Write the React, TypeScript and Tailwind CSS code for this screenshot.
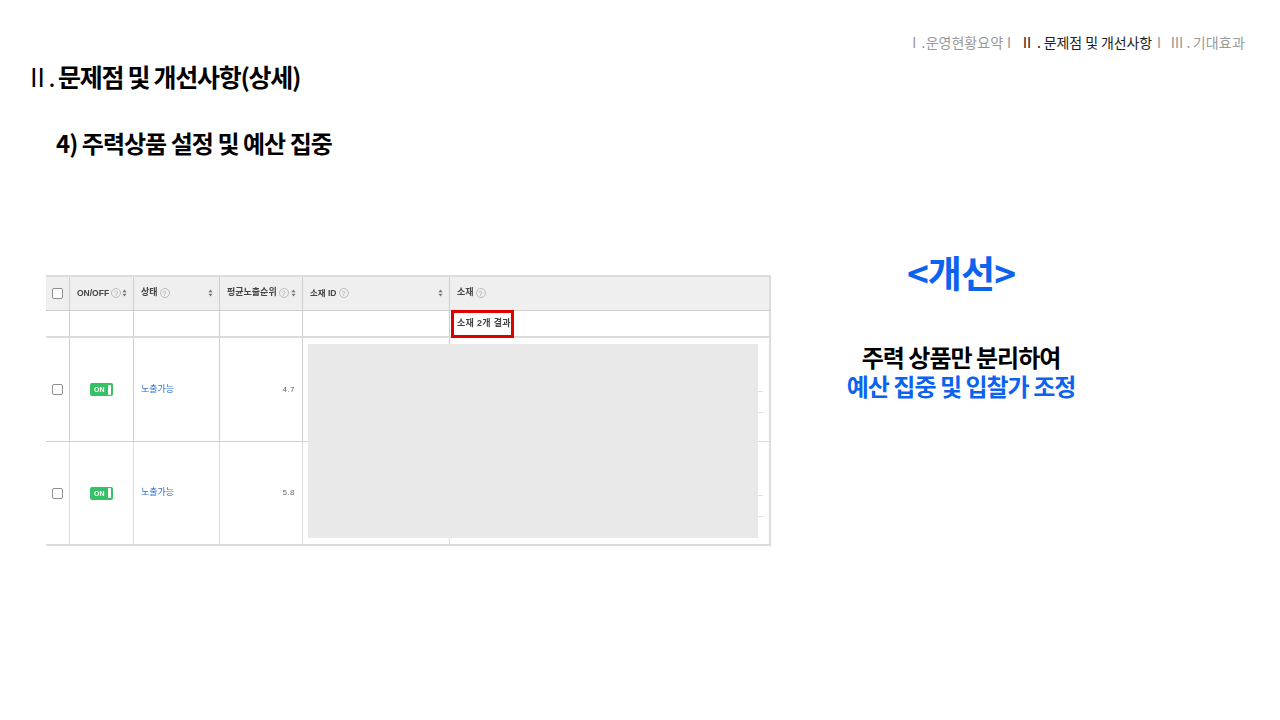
import React from "react";

const font = "font-['Noto_Sans_CJK_KR','Noto_Sans',sans-serif]";
const tableFont = "font-['Liberation_Sans','Noto_Sans_CJK_KR',sans-serif]";

const Help = () => (
    <span className="inline-flex items-center justify-center w-[10px] h-[10px] ml-[2px] rounded-full border border-[#bbb] text-[7px] leading-none text-[#aaa] font-normal">?</span>
);

const Sort = () => (
    <svg width="5" height="8" viewBox="0 0 5 8" className="shrink-0">
        <path d="M2.5 0.5 L4.6 3.2 L0.4 3.2 Z M2.5 7.5 L4.6 4.8 L0.4 4.8 Z" fill="#777"/>
    </svg>
);

const Checkbox = () => (
    <span className="block w-[11px] h-[11px] rounded-[2px] border border-[#8f8f8f] bg-white"/>
);

const HeadCell = ({label, latin}: {label: string, latin?: boolean}) => (
    <div className="flex items-center justify-between pl-[7px] pr-[6px] pb-[1px] bg-[#efefef] border-b border-r border-[#cfcfcf]">
        <span className={`flex items-center ${latin ? "text-[8.5px]" : "text-[9px]"} font-bold text-[#444] whitespace-nowrap blur-[0.3px]`}>{label}<Help/></span>
        <Sort/>
    </div>
);

const Row = ({rank, bottom}: {rank: string, bottom?: boolean}) => {
    const line = bottom ? "border-b-2 border-[#dcdcdc]" : "border-b border-[#cfcfcf]";
    return (
        <>
            <div className={`flex items-center justify-center pr-[1px] border-r border-[#cfcfcf] ${line}`}><Checkbox/></div>
            <div className={`flex items-center justify-center border-r border-[#cfcfcf] ${line}`}>
                <span className="flex items-center justify-between w-[23px] h-[13px] rounded-[2px] bg-[#35c264] pl-[4px] pr-[2px]">
                    <span className="text-[7px] font-bold text-white leading-none blur-[0.3px]">ON</span>
                    <span className="w-[3px] h-[10px] rounded-[1px] bg-white"/>
                </span>
            </div>
            <div className={`flex items-center pl-[7px] border-r border-[#cfcfcf] ${line}`}>
                <span className="text-[9px] text-[#2a6fd0] blur-[0.3px]">노출가능</span>
            </div>
            <div className={`flex items-center justify-end pr-[7px] border-r border-[#cfcfcf] ${line}`}>
                <span className="text-[8px] tracking-[0.5px] text-[#666] blur-[0.3px]">{rank}</span>
            </div>
            <div className={`border-r border-[#cfcfcf] ${line}`}/>
            <div className={`flex flex-col items-end gap-[20px] pt-[53px] pr-[6px] border-r-2 border-[#dcdcdc] ${line}`}>
                <span className="w-[5px] h-[1px] bg-[#dedede]"/>
                <span className="w-[5px] h-[1px] bg-[#dedede]"/>
            </div>
        </>
    );
};

export default function App() {
    return (
        <div className={`w-[1280px] h-[720px] bg-white overflow-hidden ${font}`}>
            <div className="flex justify-end pt-[32px] pr-[35px] text-[14px] leading-[20px] text-[#999] whitespace-pre">
                <span className="tracking-[-1.4px]">Ⅰ . </span>
                <span>운영현황요약</span>
                <span className="ml-[-1px]">Ⅰ</span>
                <span className="ml-[4px] text-[#222] tracking-[-0.1px]">Ⅱ . 문제점 및 개선사항</span>
                <span>Ⅰ</span>
                <span className="ml-[4px] tracking-[-0.4px]">Ⅲ . </span>
                <span className="tracking-[0.2px]">기대효과</span>
            </div>

            <h1 className="pl-[25px] mt-[6px] text-[25px] leading-[36px] font-bold tracking-[-1.3px] text-black">
                <span className="font-normal tracking-[-1.5px]">Ⅱ. </span>문제점 및 개선사항(상세)
            </h1>
            <h2 className="pl-[56px] mt-[32px] text-[24px] leading-[34px] font-bold tracking-[-0.97px] text-black">4) 주력상품 설정 및 예산 집중</h2>

            <div className="flex mt-[115px] pl-[46px]">
                <div className={`relative shrink-0 grid grid-cols-[24px_64px_86px_83px_147px_321px] grid-rows-[34px_27px_104px_104px] border-t-2 border-[#dcdcdc] ${tableFont}`}>
                    <div className="flex items-center justify-center pr-[1px] bg-[#efefef] border-r border-b border-[#cfcfcf]"><Checkbox/></div>
                    <HeadCell label="ON/OFF" latin/>
                    <HeadCell label="상태"/>
                    <HeadCell label="평균노출순위"/>
                    <HeadCell label="소재 ID" latin/>
                    <div className="flex items-center pl-[7px] pb-[1px] bg-[#efefef] border-b border-r-2 border-[#cfcfcf] border-r-[#dcdcdc]">
                        <span className="flex items-center text-[9px] font-bold text-[#444] blur-[0.3px]">소재<Help/></span>
                    </div>

                    <div className="border-r border-b-2 border-[#cfcfcf] border-b-[#dcdcdc]"/>
                    <div className="border-r border-b-2 border-[#cfcfcf] border-b-[#dcdcdc]"/>
                    <div className="border-r border-b-2 border-[#cfcfcf] border-b-[#dcdcdc]"/>
                    <div className="border-r border-b-2 border-[#cfcfcf] border-b-[#dcdcdc]"/>
                    <div className="border-r border-b-2 border-[#cfcfcf] border-b-[#dcdcdc]"/>
                    <div className="flex items-center pl-[7px] pt-[1px] border-r-2 border-b-2 border-[#dcdcdc]">
                        <span className="text-[9px] font-bold text-[#444] tracking-[0.3px] blur-[0.3px]">소재 2개 결과</span>
                    </div>

                    <Row rank="4.7"/>
                    <Row rank="5.8" bottom/>

                    {/* masked creative area + highlight drawn over the table */}
                    <div className="absolute left-[262px] top-[67px] w-[450px] h-[194px] bg-[#e9e9e9]"/>
                    <div className="absolute left-[405px] top-[33px] w-[63px] h-[28px] border-[3px] border-[#e00000]"/>
                </div>

                <div className="ml-[75px] w-[230px] flex flex-col items-center text-center font-bold">
                    <div className="mt-[-28px] text-[37px] leading-[50px] tracking-[-0.9px] text-[#0b63f0]">&lt;개선&gt;</div>
                    <div className="mt-[45px] text-[24px] leading-[29px] tracking-[-1px] text-black whitespace-nowrap">주력 상품만 분리하여</div>
                    <div className="text-[24px] leading-[29px] tracking-[-1px] text-[#0b63f0] whitespace-nowrap">예산 집중 및 입찰가 조정</div>
                </div>
            </div>
        </div>
    );
}
